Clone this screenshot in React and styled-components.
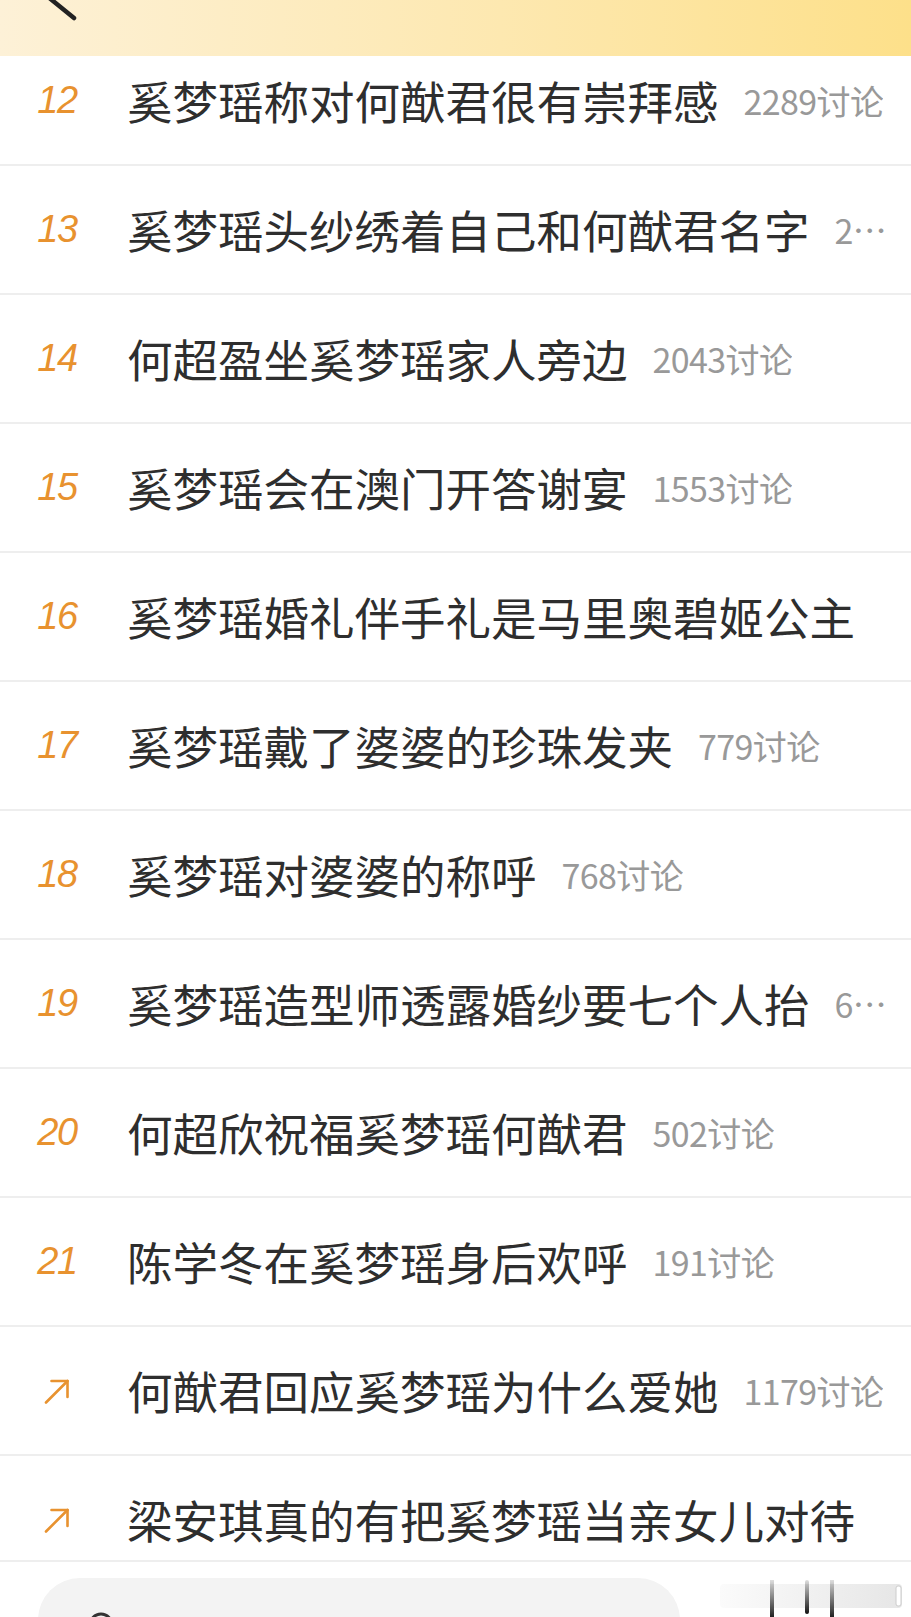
import React from 'react';
import styled, { createGlobalStyle } from 'styled-components';

const GlobalStyle = createGlobalStyle`
    body {
        margin: 0;
        background: #fff;
        font-family: 'Noto Sans CJK SC', 'Noto Sans', sans-serif;
    }
`;

const topics = [
    { rank: '12', title: '奚梦瑶称对何猷君很有崇拜感', count: '2289讨论' },
    { rank: '13', title: '奚梦瑶头纱绣着自己和何猷君名字', count: '2156讨论' },
    { rank: '14', title: '何超盈坐奚梦瑶家人旁边', count: '2043讨论' },
    { rank: '15', title: '奚梦瑶会在澳门开答谢宴', count: '1553讨论' },
    { rank: '16', title: '奚梦瑶婚礼伴手礼是马里奥碧姬公主' },
    { rank: '17', title: '奚梦瑶戴了婆婆的珍珠发夹', count: '779讨论' },
    { rank: '18', title: '奚梦瑶对婆婆的称呼', count: '768讨论' },
    { rank: '19', title: '奚梦瑶造型师透露婚纱要七个人抬', count: '653讨论' },
    { rank: '20', title: '何超欣祝福奚梦瑶何猷君', count: '502讨论' },
    { rank: '21', title: '陈学冬在奚梦瑶身后欢呼', count: '191讨论' },
    { rising: true, title: '何猷君回应奚梦瑶为什么爱她', count: '1179讨论' },
    { rising: true, title: '梁安琪真的有把奚梦瑶当亲女儿对待' },
];

function RiseArrow() {
    return (
        <svg width="26" height="26" viewBox="0 0 26 26" fill="none"
            stroke="#e8922f" strokeWidth="2.6" strokeLinecap="round" strokeLinejoin="round">
            <path d="M2 24.5 L23.5 3" />
            <path d="M7.5 3 H23.5 V19" />
        </svg>
    );
}

function App() {
    return (
        <Page>
            <GlobalStyle />
            <Header>
                <svg width="100" height="56" viewBox="0 0 100 56">
                    <path d="M84 -36 L42 -8 L74 18" fill="none" stroke="#222"
                        strokeWidth="4.5" strokeLinecap="round" strokeLinejoin="round" />
                </svg>
            </Header>

            <List>
                {topics.map((t, i) => (
                    <Row key={i}>
                        <Rank>{t.rising ? <RiseArrow /> : t.rank}</Rank>
                        <Title>{t.title}</Title>
                        {t.count && <Count>{t.count}</Count>}
                    </Row>
                ))}
            </List>

            <BottomBar>
                <SearchPill>
                    <svg width="34" height="34" viewBox="0 0 34 34" fill="none"
                        stroke="#333" strokeWidth="3" strokeLinecap="round">
                        <circle cx="15" cy="15" r="11" />
                        <path d="M23 23 L31 31" />
                    </svg>
                </SearchPill>
                <Tools>
                    <svg width="190" height="40" viewBox="0 0 190 40">
                        <defs>
                            <linearGradient id="bar" x1="0" y1="0" x2="1" y2="0">
                                <stop offset="0" stopColor="#fbfbfb" />
                                <stop offset="1" stopColor="#e6e6e6" />
                            </linearGradient>
                            <linearGradient id="fade" x1="0" y1="0" x2="0" y2="1">
                                <stop offset="0" stopColor="#222" stopOpacity="0.15" />
                                <stop offset="1" stopColor="#111" stopOpacity="1" />
                            </linearGradient>
                        </defs>
                        <rect x="2" y="4" width="182" height="24" rx="4" fill="url(#bar)" />
                        <rect x="178" y="6" width="5" height="20" rx="2" fill="#fff" stroke="#ccc" />
                        <rect x="52" y="0" width="4" height="40" fill="url(#fade)" />
                        <rect x="87" y="0" width="4" height="34" rx="2" fill="url(#fade)" />
                        <rect x="112" y="0" width="4" height="40" fill="url(#fade)" />
                    </svg>
                </Tools>
            </BottomBar>
        </Page>
    );
}

const Page = styled.div`
    position: relative;
    height: 1617px;
    overflow: hidden;
    background: #fff;
`;

const Header = styled.header`
    position: absolute;
    top: 0;
    left: 0;
    right: 0;
    height: 56px;
    z-index: 2;
    display: flex;
    align-items: flex-start;
    background: linear-gradient(90deg, #fdf1d7 0%, #fde8b0 55%, #fde08a 100%);
`;

const List = styled.div`
    display: flex;
    flex-direction: column;
    padding-top: 37px;
`;

const Row = styled.div`
    box-sizing: border-box;
    height: 129px;
    display: flex;
    align-items: center;
    padding: 0 19px 0 18px;
    border-bottom: 2px solid #eeeeee;
    white-space: nowrap;
`;

const Rank = styled.div`
    flex: none;
    width: 78px;
    margin-right: 31px;
    display: flex;
    justify-content: center;
    align-items: center;
    font-family: 'Liberation Sans', Arial, sans-serif;
    font-style: italic;
    font-size: 38px;
    color: #e8922f;
    letter-spacing: -1.5px;
`;

const Title = styled.div`
    flex: none;
    font-size: 45.5px;
    color: #2e2e2e;
    line-height: 1.2;
`;

const Count = styled.div`
    flex: 0 1 auto;
    min-width: 0;
    margin-left: 25px;
    overflow: hidden;
    text-overflow: ellipsis;
    font-size: 34px;
    color: #999999;
    letter-spacing: -0.6px;
`;

const BottomBar = styled.div`
    position: absolute;
    left: 0;
    right: 0;
    bottom: 0;
    height: 57px;
    box-sizing: border-box;
    border-top: 2px solid #eeeeee;
    background: #fff;
    display: flex;
    align-items: flex-start;
    padding: 16px 0 0 38px;
    z-index: 2;
`;

const SearchPill = styled.div`
    width: 642px;
    height: 84px;
    border-radius: 42px;
    background: #f3f3f3;
    display: flex;
    align-items: flex-start;
    padding: 32px 0 0 48px;
    box-sizing: border-box;
`;

const Tools = styled.div`
    margin-left: 38px;
    margin-top: 2px;
`;

export default App;
